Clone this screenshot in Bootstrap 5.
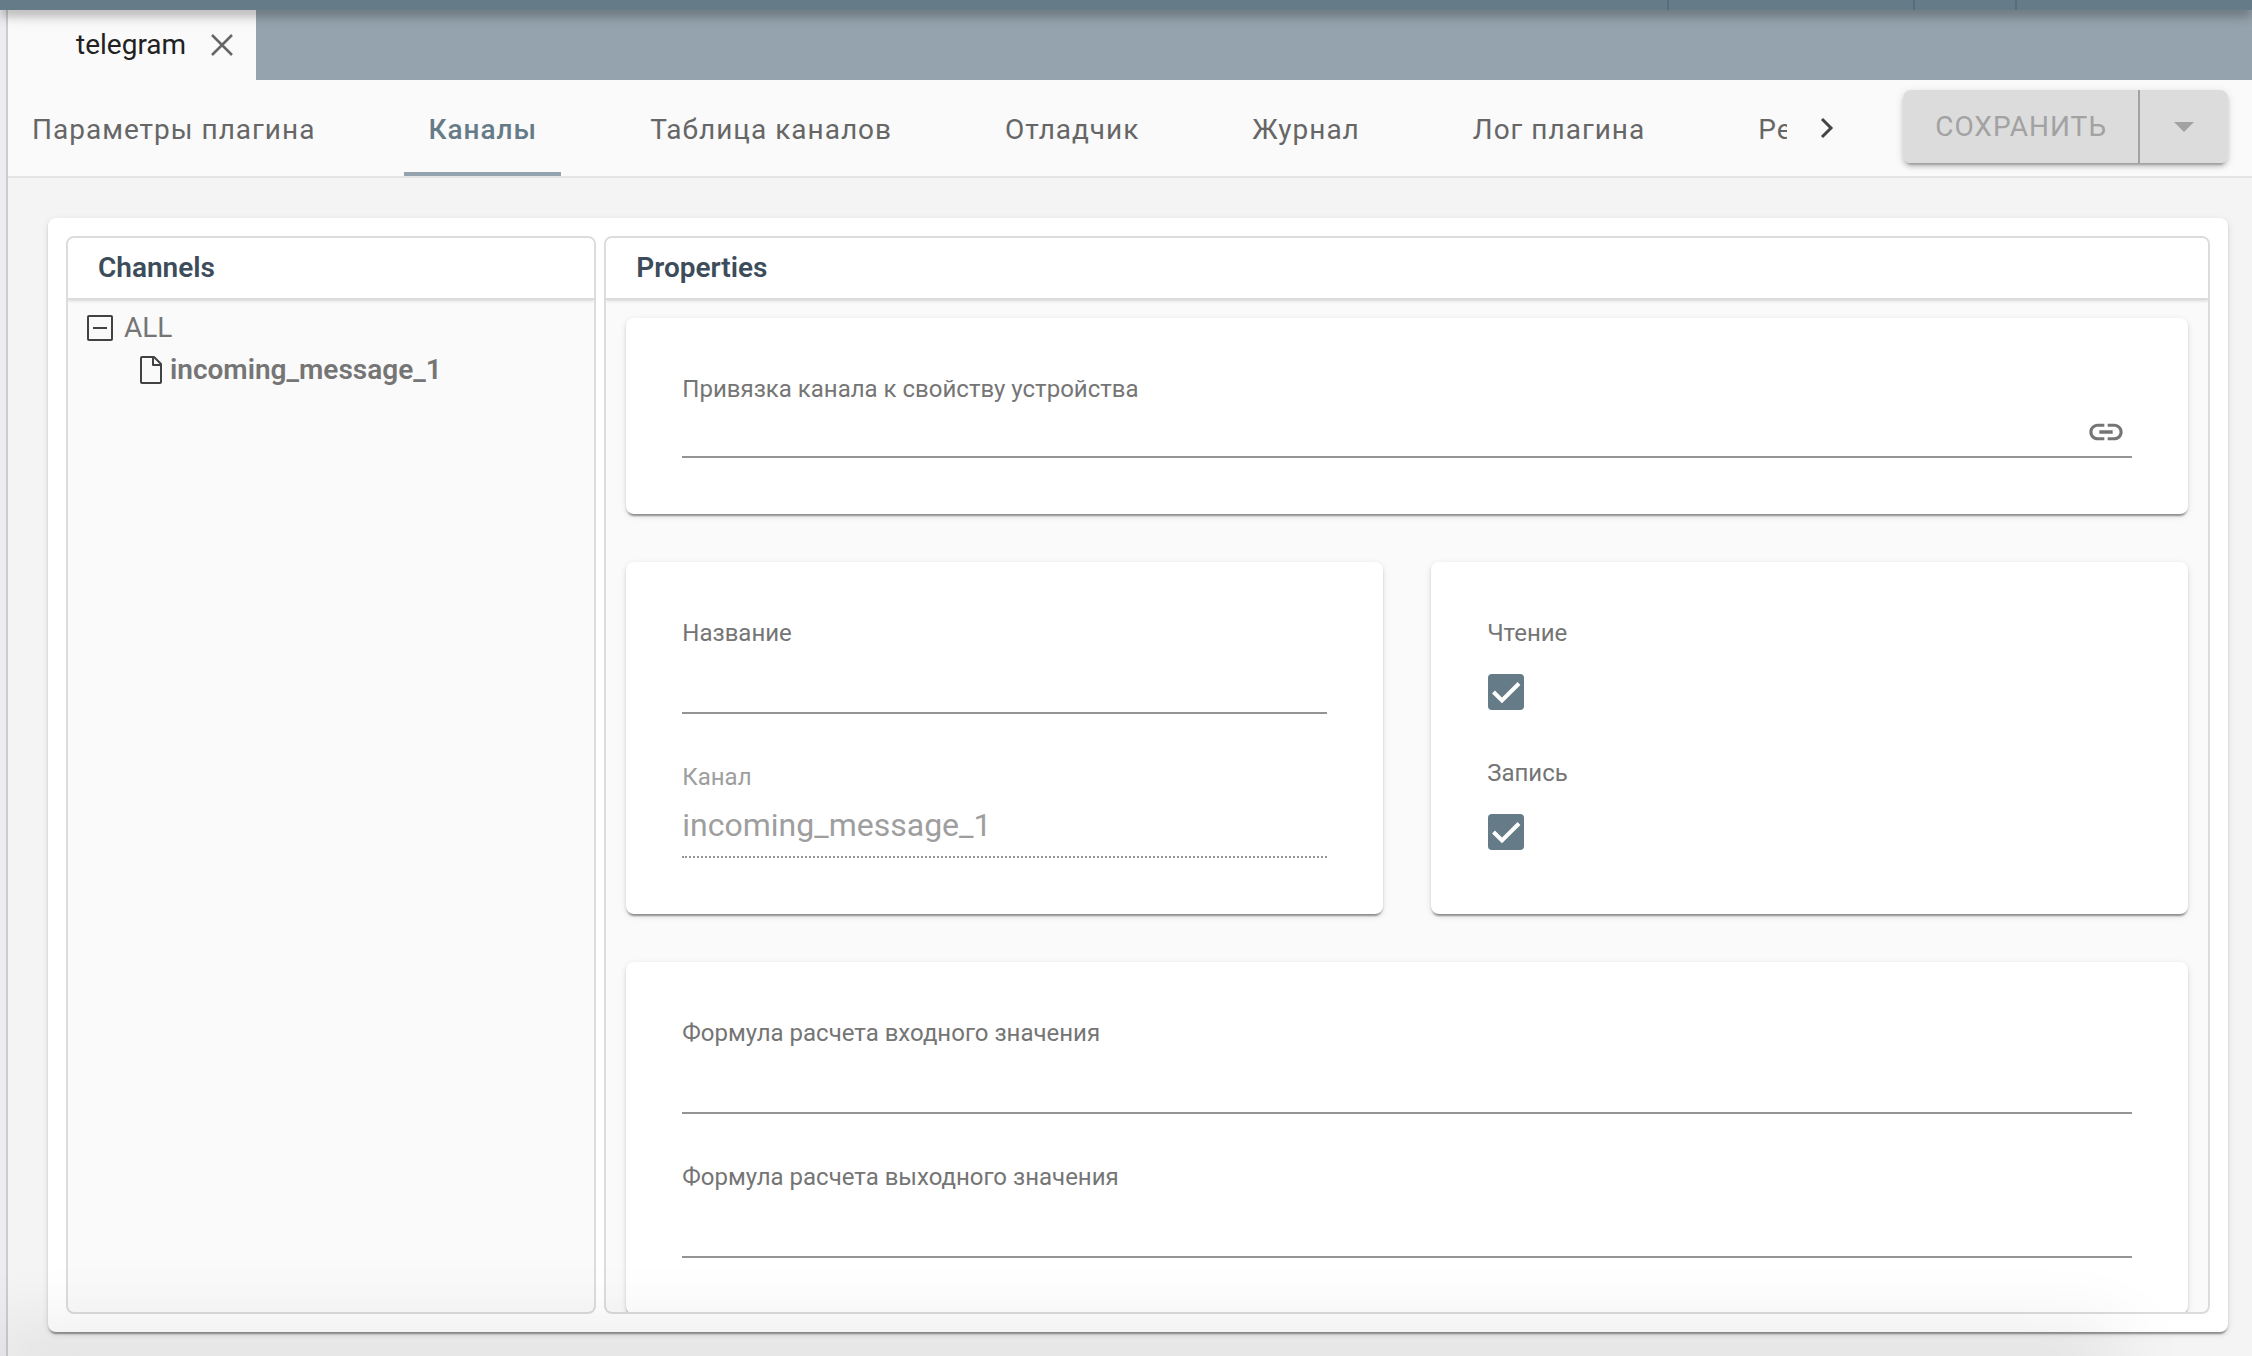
<!DOCTYPE html>
<html lang="ru">
<head>
<meta charset="utf-8">
<meta name="viewport" content="width=device-width, initial-scale=1">
<title>telegram</title>
<link href="https://cdn.jsdelivr.net/npm/bootstrap@5.3.0/dist/css/bootstrap.min.css" rel="stylesheet">
<style>
  body { font-family: Roboto, "Liberation Sans", sans-serif; font-size: 28px; line-height: 40px; background: #f4f4f4; color: #666; }
  .app-bar { height: 10px; background: #667b88; box-shadow: 0 4px 8px -2px rgba(0,0,0,.2), 0 8px 10px rgba(0,0,0,.14), 0 2px 20px rgba(0,0,0,.12); z-index: 3; }
  .app-bar span { border-left: 2px solid #566d7b; }
  .bar-a { width: 246px; } .bar-b { width: 102px; } .bar-c { width: 237px; }
  .rail { width: 8px; background: #ecedf0; border-right: 2px solid #ccc; }
  .doc-tabs { height: 70px; background: #95a3ae; }
  .doc-tab { width: 248px; background: #fafafa; color: #212121; padding: 0 22px 0 68px; }
  .plain-btn { border: 0; background: none; padding: 0; line-height: 0; color: inherit; }
  .doc-tab .plain-btn { color: #666; }
  .tool-row { background: #fafafa; border-bottom: 2px solid #e4e4e4; padding-right: 24px; }
  .tabs-strip { height: 96px; gap: 65px; }
  .tabs-strip a { color: #666; padding: 8px 24px 0; border-bottom: 4px solid transparent; text-decoration: none; white-space: nowrap; letter-spacing: 1px; }
  .tabs-strip a.active { color: #667b88; border-color: #95a3ae; font-weight: 500; }
  .strip-next { width: 80px; color: #444; }
  .save-group { margin: 10px 0 0 36px; border-radius: 8px; box-shadow: 0 6px 2px -4px rgba(0,0,0,.2), 0 4px 4px rgba(0,0,0,.14), 0 2px 10px rgba(0,0,0,.12); }
  .save-group .btn { height: 73px; font-size: 28px; line-height: 40px; letter-spacing: 1px; color: #a2a2a2; background: #dcdcdc; border: 0; border-radius: 8px; opacity: 1; padding: 0 32px; }
  .save-group .btn + .btn { border-left: 2px solid #a2a2a2; width: 90px; }
  .sheet { margin: 40px 24px 24px 40px; padding: 18px; background: #fff; gap: 8px; }
  .raised { border-radius: 8px; box-shadow: 0 4px 2px -2px rgba(0,0,0,.28), 0 2px 2px rgba(0,0,0,.14), 0 2px 6px rgba(0,0,0,.12); }
  .pane { border: 2px solid #dcdcdc; border-radius: 8px; background: #fafafa; }
  .pane-tree { flex: 23 1 0; }
  .pane-props { flex: 70 1 0; }
  .pane h2 { margin: 0; padding: 10px 30px; font-size: 28px; line-height: 40px; font-weight: 600; color: #3d4c5a; background: #fff; border-bottom: 2px solid #dcdcdc; box-shadow: 0 1px 3px rgba(0,0,0,.14); }
  .tree { padding: 7px 18px; line-height: 42px; color: #757575; }
  .tree .leaf { padding-left: 54px; font-weight: 600; gap: 8px; }
  .tree .branch { gap: 10px; }
  .props-body { padding: 18px 20px 0; gap: 48px; }
  .box { padding: 56px; background: #fff; gap: 48px; }
  .box-half { flex: 1 1 0; }
  .field label { display: block; font-size: 24px; line-height: 30px; color: #757575; }
  .field .form-control { height: 66px; padding: 2px 0 0; border: 0; border-bottom: 2px solid #949494; border-radius: 0; background: none; font-size: 32px; line-height: 40px; color: #333; }
  .field .form-control:disabled { border-bottom-style: dotted; color: #9e9e9e; }
  .field.off label { color: #9e9e9e; }
  .linked { border-bottom: 2px solid #949494; padding: 4px 6px 0 0; }
  .linked .form-control { height: 48px; border: 0; }
  .linked .plain-btn { color: #757575; }
  .field .form-check-input { display: block; float: none; width: 36px; height: 36px; margin: 26px 0 0 1px; border: 0; border-radius: 4px; }
  .field .form-check-input:checked { background-color: #667b88; background-size: 36px 36px; background-image: url("data:image/svg+xml,%3csvg xmlns='http://www.w3.org/2000/svg' viewBox='0 0 36 36'%3e%3cpath fill='none' stroke='%23fff' stroke-width='4' d='M5.500 18l8.500 8.500L31 9.500'/%3e%3c/svg%3e"); }
  .dock-shade { position: fixed; left: 0; right: 150px; bottom: -2px; height: 1px; box-shadow: 0 0 76px 14px rgba(0,0,0,.18); pointer-events: none; }
</style>
</head>
<body class="vh-100 d-flex flex-column overflow-hidden">
  <header class="app-bar flex-shrink-0 d-flex justify-content-end position-relative">
    <span class="bar-a"></span><span class="bar-b"></span><span class="bar-c"></span>
  </header>
  <div class="d-flex flex-grow-1 overflow-hidden">
    <div class="rail flex-shrink-0"></div>
    <div class="d-flex flex-column flex-grow-1 overflow-hidden">
      <div class="doc-tabs d-flex flex-shrink-0">
        <div class="doc-tab d-flex align-items-center justify-content-between">
          <span>telegram</span>
          <button class="plain-btn" type="button" aria-label="Закрыть">
            <svg width="24" height="24" viewBox="0 0 24 24" fill="none" stroke="currentColor" stroke-width="2.500"><path d="M2 2l20 20M22 2L2 22"/></svg>
          </button>
        </div>
      </div>
      <div class="tool-row d-flex align-items-stretch flex-shrink-0">
        <nav class="tabs-strip d-flex overflow-hidden flex-grow-1">
          <a class="d-flex align-items-center" href="#">Параметры плагина</a>
          <a class="d-flex align-items-center active" href="#" aria-current="page">Каналы</a>
          <a class="d-flex align-items-center" href="#">Таблица каналов</a>
          <a class="d-flex align-items-center" href="#">Отладчик</a>
          <a class="d-flex align-items-center" href="#">Журнал</a>
          <a class="d-flex align-items-center" href="#">Лог плагина</a>
          <a class="d-flex align-items-center" href="#">Ресурсы</a>
        </nav>
        <button class="plain-btn strip-next flex-shrink-0" type="button" aria-label="Далее">
          <svg width="20" height="24" viewBox="0 0 20 24" fill="none" stroke="currentColor" stroke-width="3"><path d="M5 3l9 9-9 9"/></svg>
        </button>
        <div class="btn-group save-group align-self-start flex-shrink-0">
          <button class="btn" type="button" disabled>СОХРАНИТЬ</button>
          <button class="btn" type="button" disabled aria-label="Другие действия">
            <svg class="d-block mx-auto" width="20" height="10" viewBox="0 0 20 10" fill="currentColor"><path d="M0 0h20L10 10z"/></svg>
          </button>
        </div>
      </div>
      <main class="sheet raised d-flex flex-grow-1 overflow-hidden">
        <section class="pane pane-tree d-flex flex-column overflow-hidden">
          <h2>Channels</h2>
          <div class="tree">
            <div class="branch d-flex align-items-center">
              <svg width="28" height="28" viewBox="0 0 28 28" fill="none" stroke="#424242" stroke-width="2"><rect x="2" y="2" width="24" height="24" rx="1"/><path d="M7 14h14"/></svg>
              <span>ALL</span>
            </div>
            <div class="leaf d-flex align-items-center">
              <svg width="22" height="28" viewBox="0 0 22 28" fill="none" stroke="#424242" stroke-width="2" stroke-linejoin="round"><path d="M2 1h12l7 7v18a1 1 0 0 1-1 1H2a1 1 0 0 1-1-1V2a1 1 0 0 1 1-1zM13 1v8h8"/></svg>
              <span>incoming_message_1</span>
            </div>
          </div>
        </section>
        <section class="pane pane-props d-flex flex-column overflow-hidden">
          <h2>Properties</h2>
          <form class="props-body d-flex flex-column overflow-hidden">
            <div class="box raised flex-shrink-0">
              <div class="field">
                <label for="binding">Привязка канала к свойству устройства</label>
                <div class="linked d-flex align-items-center">
                  <input class="form-control" id="binding" type="text">
                  <button class="plain-btn" type="button" aria-label="Привязать">
                    <svg width="40" height="40" viewBox="0 0 24 24" fill="currentColor"><path d="M3.900 12c0-1.710 1.390-3.100 3.100-3.100h4V7H7c-2.760 0-5 2.240-5 5s2.240 5 5 5h4v-1.900H7c-1.710 0-3.100-1.390-3.100-3.100zM8 13h8v-2H8v2zm9-6h-4v1.900h4c1.710 0 3.100 1.390 3.100 3.100s-1.390 3.100-3.100 3.100h-4V17h4c2.760 0 5-2.240 5-5s-2.240-5-5-5z"/></svg>
                  </button>
                </div>
              </div>
            </div>
            <div class="d-flex gap-5 flex-shrink-0">
              <div class="box box-half raised d-flex flex-column">
                <div class="field">
                  <label for="title">Название</label>
                  <input class="form-control" id="title" type="text">
                </div>
                <div class="field off">
                  <label for="channel">Канал</label>
                  <input class="form-control" id="channel" type="text" value="incoming_message_1" disabled>
                </div>
              </div>
              <div class="box box-half raised d-flex flex-column">
                <div class="field">
                  <label for="read">Чтение</label>
                  <input class="form-check-input" id="read" type="checkbox" checked>
                </div>
                <div class="field">
                  <label for="write">Запись</label>
                  <input class="form-check-input" id="write" type="checkbox" checked>
                </div>
              </div>
            </div>
            <div class="box raised d-flex flex-column flex-shrink-0">
              <div class="field">
                <label for="formula-in">Формула расчета входного значения</label>
                <input class="form-control" id="formula-in" type="text">
              </div>
              <div class="field">
                <label for="formula-out">Формула расчета выходного значения</label>
                <input class="form-control" id="formula-out" type="text">
              </div>
            </div>
          </form>
        </section>
      </main>
    </div>
  </div>
  <div class="dock-shade"></div>
<script src="https://cdn.jsdelivr.net/npm/bootstrap@5.3.0/dist/js/bootstrap.bundle.min.js"></script>
</body>
</html>
